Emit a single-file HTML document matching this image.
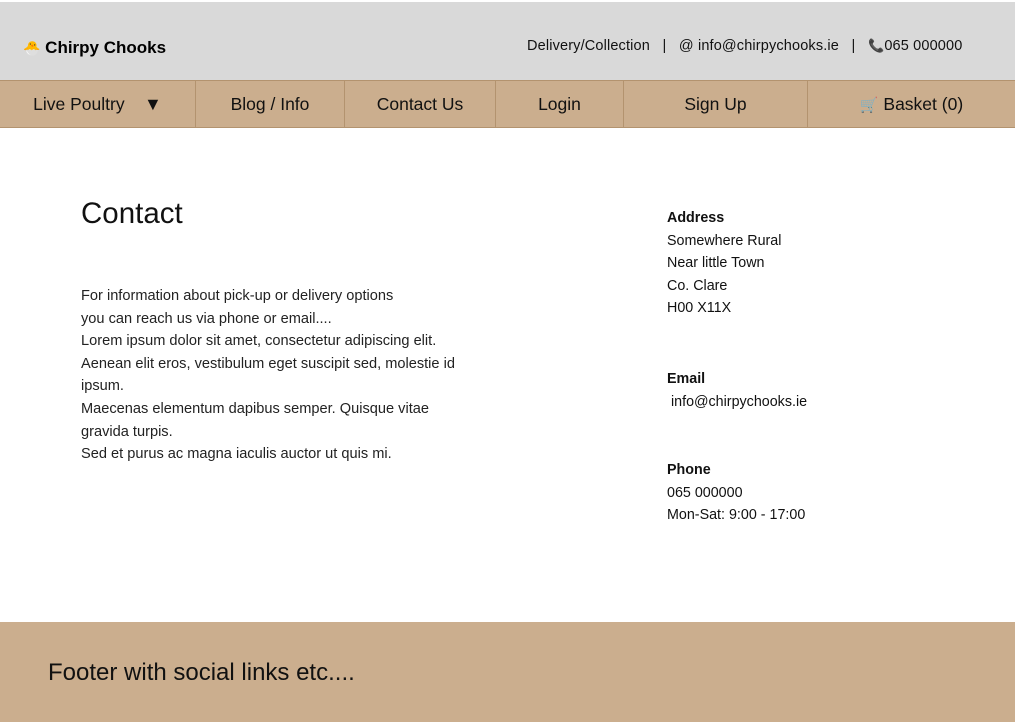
<!DOCTYPE html>
<html><head><meta charset="utf-8"><style>
*{margin:0;padding:0;box-sizing:border-box}
body{width:1015px;height:722px;background:#fff;font-family:"Liberation Sans",sans-serif;color:#000;position:relative;overflow:hidden}
.hdr{position:absolute;top:2px;left:0;width:1015px;height:78px;background:#d9d9d9}
.logo{position:absolute;left:23px;top:38px;font-size:17px;font-weight:bold}
.top{position:absolute;left:527px;top:38px;font-size:14.5px;color:#111;white-space:nowrap;letter-spacing:0.15px}
.nav{position:absolute;top:80px;left:0;width:1015px;height:48px;background:#cbae8e;border-top:1px solid #b3936f;border-bottom:1px solid #b3936f}
.nav div{position:absolute;top:0;height:47px;line-height:47px;text-align:center;font-size:17.5px;border-left:1px solid #b3936f;color:#111}
h1{position:absolute;left:81px;top:197px;font-size:29.5px;font-weight:normal;color:#111}
.p{position:absolute;left:81px;top:285px;font-size:14.6px;line-height:22.6px;color:#222}
.r{position:absolute;left:667px;font-size:14.3px;line-height:22.6px;color:#111}
.r b{display:block}
.foot{position:absolute;top:622px;left:0;width:1015px;height:100px;background:#cbae8e}
.foot span{position:absolute;left:48px;top:37px;font-size:24px;color:#111}
</style></head><body>
<div class="hdr"></div>
<div class="logo"><span style="font-size:14px">🐣</span> Chirpy Chooks</div>
<div class="top">Delivery/Collection &nbsp;&nbsp;|&nbsp;&nbsp; @ info@chirpychooks.ie &nbsp;&nbsp;|&nbsp;&nbsp; <span style="font-size:13px">📞</span>065 000000</div>
<div class="nav">
<div style="left:0;width:195px;border-left:none">Live Poultry &nbsp;&nbsp; <span style="font-size:18px">▼</span></div>
<div style="left:195px;width:149px">Blog / Info</div>
<div style="left:344px;width:151px">Contact Us</div>
<div style="left:495px;width:128px">Login</div>
<div style="left:623px;width:184px">Sign Up</div>
<div style="left:807px;width:208px"><span style="font-size:15px">🛒</span> Basket (0)</div>
</div>
<h1>Contact</h1>
<div class="p">For information about pick-up or delivery options<br>you can reach us via phone or email....<br>Lorem ipsum dolor sit amet, consectetur adipiscing elit.<br>Aenean elit eros, vestibulum eget suscipit sed, molestie id<br>ipsum.<br>Maecenas elementum dapibus semper. Quisque vitae<br>gravida turpis.<br>Sed et purus ac magna iaculis auctor ut quis mi.</div>
<div class="r" style="top:207px"><b>Address</b>Somewhere Rural<br>Near little Town<br>Co. Clare<br>H00 X11X</div>
<div class="r" style="top:368px"><b>Email</b>&nbsp;info@chirpychooks.ie</div>
<div class="r" style="top:459px"><b>Phone</b>065 000000<br>Mon-Sat: 9:00 - 17:00</div>
<div class="foot"><span>Footer with social links etc....</span></div>
</body></html>
